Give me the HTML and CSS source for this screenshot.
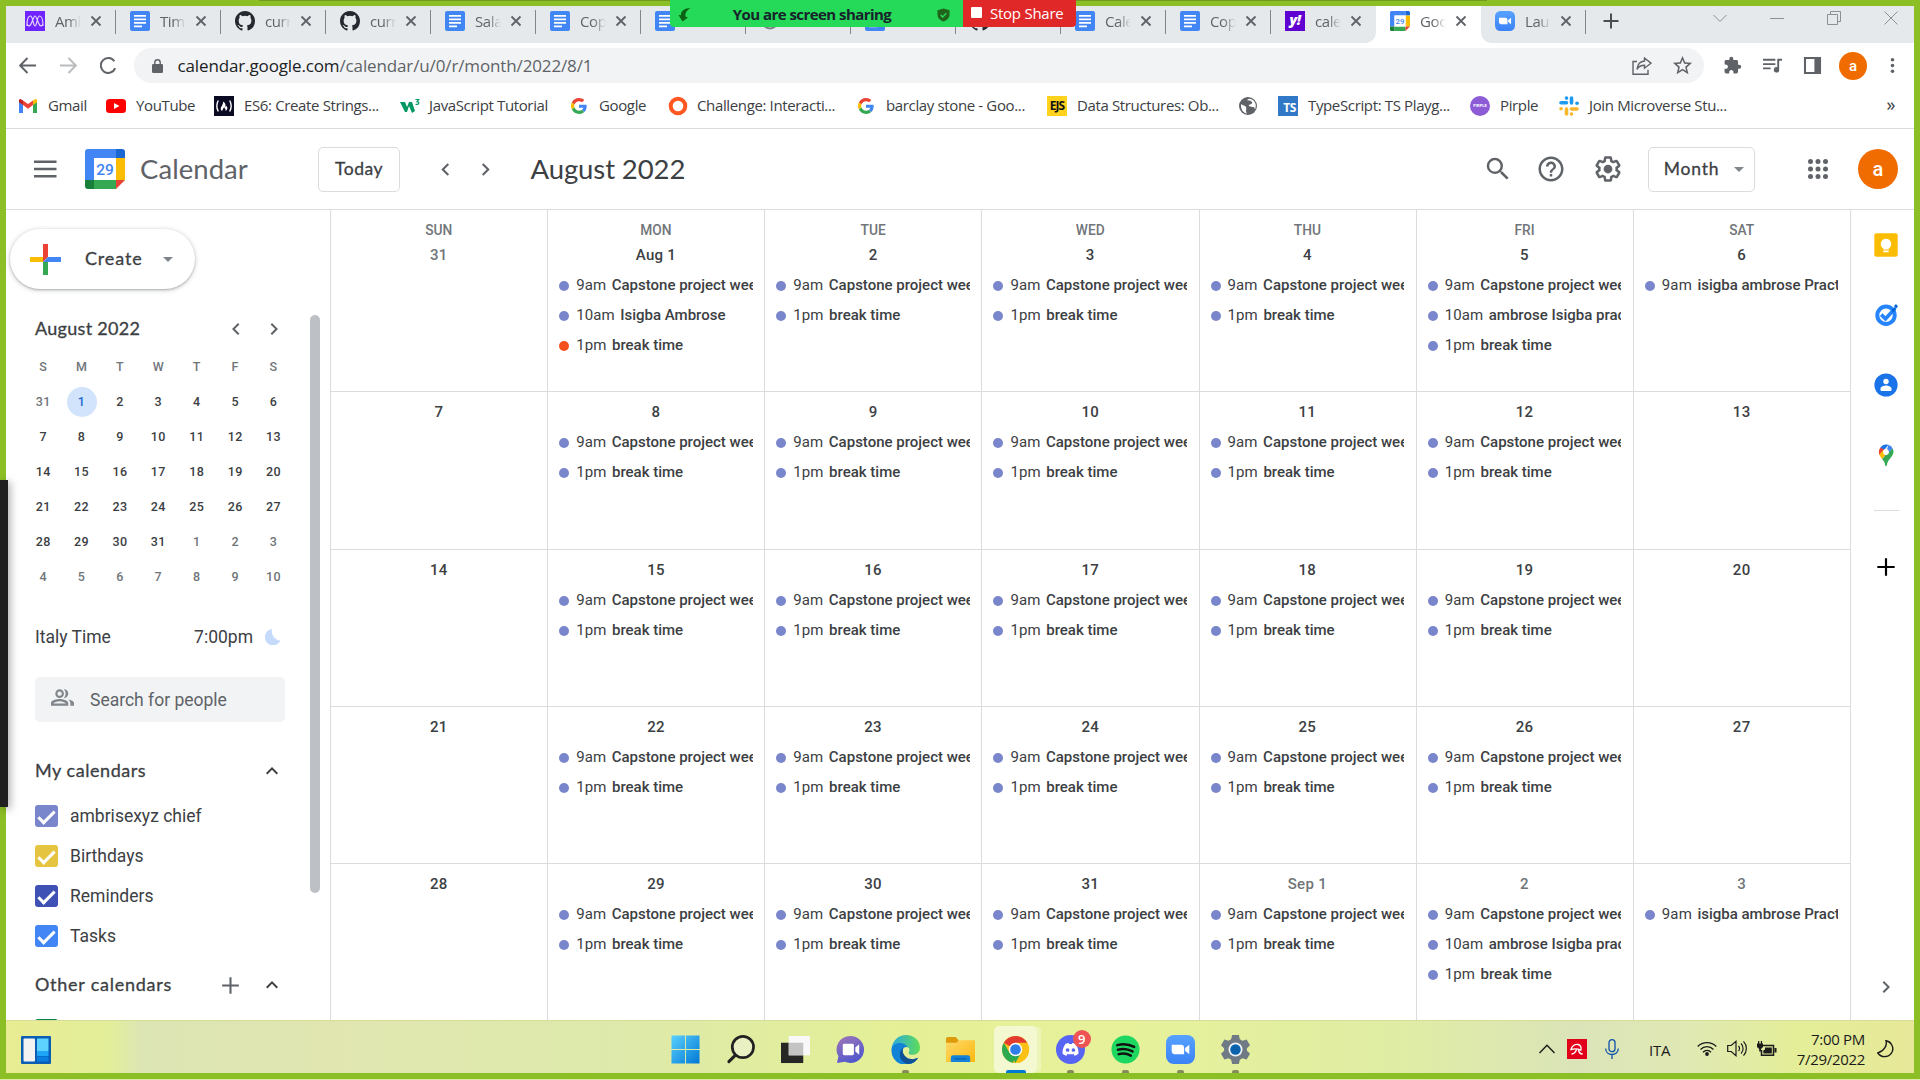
FILE: index.html
```html
<!DOCTYPE html>
<html lang="en">
<head>
<meta charset="utf-8">
<title>Google Calendar - August 2022</title>
<link rel="stylesheet" href="styles.css">
</head>
<body>
<svg class="defs" aria-hidden="true">
  <defs>
    <linearGradient id="gwin" x1="0" y1="0" x2="1" y2="1"><stop offset="0" stop-color="#5bd0ff"/><stop offset="1" stop-color="#0078d4"/></linearGradient>
    <linearGradient id="gchat" x1="0" y1="0" x2="0.5" y2="1"><stop offset="0" stop-color="#a177b8"/><stop offset="1" stop-color="#5358cc"/></linearGradient>
    <linearGradient id="gedge" x1="0" y1="0" x2="1" y2="0"><stop offset="0" stop-color="#2aa9e0"/><stop offset="1" stop-color="#5fdc58"/></linearGradient>
    <linearGradient id="gfold" x1="0" y1="0" x2="1" y2="1"><stop offset="0" stop-color="#ffd96a"/><stop offset="1" stop-color="#fbb80d"/></linearGradient>
    <linearGradient id="gzoom" x1="0" y1="0" x2="0" y2="1"><stop offset="0" stop-color="#57a2ff"/><stop offset="1" stop-color="#3b82f6"/></linearGradient>
  </defs>
  <symbol id="docs" viewBox="0 0 20 20"><rect width="20" height="20" rx="2" fill="#4285f4"/><path d="M4 4.800h12M4 8.300h12M4 11.800h12M4 15.300h8" stroke="#fff" stroke-width="1.700"/></symbol>
  <symbol id="github" viewBox="0 0 16 16"><path fill="#24292f" d="M8 0C3.580 0 0 3.580 0 8c0 3.540 2.290 6.530 5.470 7.590.4.070.55-.17.55-.38 0-.19-.01-.82-.01-1.490-2.010.37-2.530-.49-2.690-.94-.09-.23-.48-.94-.82-1.130-.28-.15-.68-.52-.01-.53.63-.01 1.080.58 1.230.82.72 1.210 1.870.87 2.330.66.07-.52.28-.87.51-1.070-1.780-.2-3.640-.89-3.640-3.950 0-.87.31-1.590.82-2.150-.08-.2-.36-1.020.08-2.120 0 0 .67-.21 2.200.82a7.600 7.600 0 0 1 4 0c1.530-1.040 2.200-.82 2.200-.82.44 1.100.16 1.920.08 2.120.51.56.82 1.270.82 2.150 0 3.070-1.870 3.750-3.650 3.950.29.25.54.73.54 1.480 0 1.070-.01 1.930-.01 2.200 0 .21.15.46.55.38A8.010 8.010 0 0 0 16 8c0-4.420-3.580-8-8-8z"/></symbol>
  <symbol id="x" viewBox="0 0 12 12"><path d="M1.500 1.500l9 9M10.500 1.500l-9 9" stroke="#5f6368" stroke-width="1.800"/></symbol>
  <symbol id="gcal" viewBox="0 0 40 40"><path d="M3 0h28v9H9v22H0V3a3 3 0 0 1 3-3z" fill="#4285f4"/><path d="M31 0h6a3 3 0 0 1 3 3v6h-9z" fill="#1967d2"/><path d="M31 9h9v22h-9z" fill="#fbbc04"/><path d="M9 31h22v9H9z" fill="#34a853"/><path d="M0 31h9v9H3a3 3 0 0 1-3-3z" fill="#188038"/><path d="M31 31h9l-9 9z" fill="#ea4335"/><path d="M9 9h22v22H9z" fill="#fff"/><text x="20" y="26" text-anchor="middle" font-family="Roboto,sans-serif" font-weight="500" font-size="15.500" fill="#4285f4">29</text></symbol>
  <symbol id="google" viewBox="0 0 48 48"><path fill="#ea4335" d="M24 9.500c3.540 0 6.710 1.220 9.210 3.600l6.850-6.850C35.900 2.380 30.470 0 24 0 14.620 0 6.510 5.380 2.560 13.220l7.980 6.190C12.430 13.720 17.740 9.500 24 9.500z"/><path fill="#4285f4" d="M46.980 24.550c0-1.570-.15-3.090-.38-4.550H24v9.020h12.940c-.58 2.960-2.260 5.480-4.780 7.180l7.730 6c4.510-4.180 7.090-10.360 7.090-17.650z"/><path fill="#fbbc05" d="M10.530 28.590a14.500 14.500 0 0 1 0-9.180l-7.980-6.190a24 24 0 0 0 0 21.560l7.980-6.190z"/><path fill="#34a853" d="M24 48c6.480 0 11.930-2.130 15.890-5.810l-7.730-6c-2.150 1.450-4.920 2.300-8.160 2.300-6.260 0-11.570-4.220-13.470-9.910l-7.980 6.190C6.510 42.620 14.620 48 24 48z"/></symbol>
  <symbol id="left" viewBox="0 0 24 24"><path d="M15.410 7.410L14 6l-6 6 6 6 1.410-1.410L10.830 12z"/></symbol>
  <symbol id="right" viewBox="0 0 24 24"><path d="M10 6L8.590 7.410 13.170 12l-4.580 4.590L10 18l6-6z"/></symbol>
  <symbol id="up" viewBox="0 0 24 24"><path d="M12 8l-6 6 1.410 1.410L12 10.830l4.590 4.580L18 14z"/></symbol>
  <symbol id="caret" viewBox="0 0 10 5"><path d="M0 0h10L5 5z" fill="#80868b"/></symbol>
  <symbol id="plus" viewBox="0 0 24 24"><path d="M20 13h-7v7h-2v-7H4v-2h7V4h2v7h7v2z"/></symbol>
  <symbol id="zoomapp" viewBox="0 0 28 28"><rect width="28" height="28" rx="7.500" fill="url(#gzoom)"/><path d="M5.500 9.500h9a3 3 0 0 1 3 3v6h-9a3 3 0 0 1-3-3zM18.500 12.500l4-3v9l-4-3z" fill="#fff"/></symbol>
</svg>

<div class="window">
  <div class="tabs">
    <div class="tab"><svg class="fav" viewBox="0 0 20 20"><rect width="20" height="20" fill="#6f23ff"/><path d="M2 15C2 9 3 5 5.500 5S8 15 10 15s2-10 4.500-10S18 9 18 15M2 13c1.500 3 3 2.500 4.500-1S9 5 10 5s2 3.500 3.500 7 3 4 4.500 1" fill="none" stroke="#e3d3ff" stroke-width="1.200"/></svg><span class="label">Aml</span><svg class="x"><use href="#x"/></svg></div>
    <div class="tab"><svg class="fav"><use href="#docs"/></svg><span class="label">Time</span><svg class="x"><use href="#x"/></svg></div>
    <div class="tab"><svg class="fav"><use href="#github"/></svg><span class="label">curr</span><svg class="x"><use href="#x"/></svg></div>
    <div class="tab"><svg class="fav"><use href="#github"/></svg><span class="label">curr</span><svg class="x"><use href="#x"/></svg></div>
    <div class="tab"><svg class="fav"><use href="#docs"/></svg><span class="label">Sala</span><svg class="x"><use href="#x"/></svg></div>
    <div class="tab"><svg class="fav"><use href="#docs"/></svg><span class="label">Cop</span><svg class="x"><use href="#x"/></svg></div>
    <div class="tab"><svg class="fav"><use href="#docs"/></svg></div>
    <div class="tab"><svg class="fav" viewBox="0 0 20 20"><circle cx="10" cy="10" r="7.500" fill="none" stroke="#7b8085" stroke-width="2"/></svg></div>
    <div class="tab"><svg class="fav"><use href="#docs"/></svg></div>
    <div class="tab"><svg class="fav"><use href="#github"/></svg></div>
    <div class="tab"><svg class="fav"><use href="#docs"/></svg><span class="label">Cale</span><svg class="x"><use href="#x"/></svg></div>
    <div class="tab"><svg class="fav"><use href="#docs"/></svg><span class="label">Cop</span><svg class="x"><use href="#x"/></svg></div>
    <div class="tab before"><span class="fav yahoo">y!</span><span class="label">cale</span><svg class="x"><use href="#x"/></svg></div>
    <div class="tab active"><svg class="fav"><use href="#gcal"/></svg><span class="label">Goo</span><svg class="x"><use href="#x"/></svg></div>
    <div class="tab after"><svg class="fav"><use href="#zoomapp"/></svg><span class="label">Lau</span><svg class="x"><use href="#x"/></svg></div>
    <svg class="newtab" viewBox="0 0 16 16"><path d="M8 .5v15M.5 8h15" stroke="#4a4d51" stroke-width="2"/></svg>
    <div class="controls">
      <svg viewBox="0 0 14 14"><path d="M.5 4l6.500 6.500L13.500 4"/></svg>
      <svg viewBox="0 0 14 14"><path d="M0 7.500h14"/></svg>
      <svg viewBox="0 0 14 14"><path d="M.5 3.500h10v10H.5zM3.500 3.500V.5h10v10h-3"/></svg>
      <svg viewBox="0 0 14 14"><path d="M.5.5l13 13M13.500.5l-13 13"/></svg>
    </div>
  </div>

  <div class="toolbar">
    <svg class="nav" viewBox="0 0 16 16"><path d="M16 8H1.500M8 1L1 8l7 7" stroke="#5f6368"/></svg>
    <svg class="nav" viewBox="0 0 16 16"><path d="M0 8h14.500M8 1l7 7-7 7" stroke="#babcbe"/></svg>
    <svg class="nav" viewBox="0 0 16 16"><path d="M14.300 10.500A7 7 0 1 1 13.500 4" stroke="#5f6368"/><path d="M15.500.5v6.200H9.300z" fill="#5f6368" stroke="none"/></svg>
    <div class="omnibox">
      <svg class="lock" viewBox="0 0 11 14"><rect y="5" width="11" height="9" rx="1.200" fill="#5f6368"/><path d="M2.800 6V3.500a2.700 2.700 0 0 1 5.400 0V6" fill="none" stroke="#5f6368" stroke-width="1.400"/></svg>
      <span class="url"><b>calendar.google.com</b>/calendar/u/0/r/month/2022/8/1</span>
      <svg class="share" viewBox="0 0 20 18"><path d="M5 4.500H1v12.800h15v-4.500M12.500 1l6.500 5.200-6.500 5V8.300c-4 0-6 1.500-7.500 4 .5-4.500 3-8 7.500-8.300z" fill="none" stroke="#5f6368" stroke-width="1.400"/></svg>
      <svg class="star" viewBox="0 0 24 24"><path fill="#5f6368" d="M22 9.240l-7.190-.62L12 2 9.190 8.630 2 9.240l5.460 4.730L5.820 21 12 17.270 18.180 21l-1.630-7.030L22 9.240zM12 15.400l-3.760 2.270 1-4.280-3.320-2.880 4.380-.38L12 6.100l1.710 4.040 4.380.38-3.320 2.880 1 4.280L12 15.400z"/></svg>
    </div>
    <div class="tools">
      <svg viewBox="0 0 24 24"><path d="M20.500 11H19V7c0-1.100-.9-2-2-2h-4V3.500a2.500 2.500 0 0 0-5 0V5H4c-1.100 0-1.990.9-1.990 2v3.800H3.500c1.490 0 2.700 1.210 2.700 2.700s-1.210 2.700-2.700 2.700H2V20c0 1.100.9 2 2 2h3.800v-1.500c0-1.490 1.210-2.700 2.700-2.700 1.490 0 2.700 1.210 2.700 2.700V22H17c1.100 0 2-.9 2-2v-4h1.500a2.500 2.500 0 0 0 0-5z"/></svg>
      <svg viewBox="0 0 20 20"><path d="M0 3h13v2H0zM0 7.500h13v2H0zM0 12h8v2H0zM15 3h5v2h-3v9.500a2.800 2.800 0 1 1-2-2.600z"/></svg>
      <svg viewBox="0 0 20 20"><path d="M1 1h18v18H1zM3.200 3.200v13.600H12V3.200z" fill-rule="evenodd"/></svg>
      <span class="me small">a</span>
      <svg viewBox="0 0 20 20"><circle cx="10" cy="4" r="1.900"/><circle cx="10" cy="10" r="1.900"/><circle cx="10" cy="16" r="1.900"/></svg>
    </div>
  </div>

  <div class="bookmarks">
    <div class="bm"><svg viewBox="0 0 20 20"><path d="M1 17V5l4 3v9z" fill="#4285f4"/><path d="M15 17V8l4-3v12z" fill="#34a853"/><path d="M15 4.500l2-1.300c1-.6 2 .2 2 1.300v1.700L15 9z" fill="#fbbc04"/><path d="M5 9V4.500L10 8l5-3.500V9l-5 3.800z" fill="#ea4335"/><path d="M5 4.500L3 3.200c-1-.6-2 .2-2 1.300v1.700L5 9z" fill="#c5221f"/></svg><span>Gmail</span></div>
    <div class="bm"><svg viewBox="0 0 20 20"><rect y="3" width="20" height="14" rx="3.500" fill="#f00"/><path d="M8 7l5.500 3L8 13z" fill="#fff"/></svg><span>YouTube</span></div>
    <div class="bm"><svg viewBox="0 0 20 20"><rect width="20" height="20" fill="#0a0a23"/><path d="M4.300 4.500Q1.300 10 4.300 15.500M15.700 4.500Q18.700 10 15.700 15.500" fill="none" stroke="#fff" stroke-width="1.400"/><path d="M8 15c-3.500-3 1.500-5.500 1.200-9.500 3 1.800 2 4 2.600 5.500.6-.4.500-1 .3-1.500 2 2 1.500 4.500-.6 5.500.8-1.800-1-2.500-1.200-3.800-1.300 1-1.300 2.300-2.300 3.800z" fill="#fff"/></svg><span>ES6: Create Strings...</span></div>
    <div class="bm"><svg viewBox="0 0 20 20"><path d="M0 6h5l2 5 2-5h3l3 9-3 2-3-7-2 6H5z" fill="#059862"/><path d="M15.500 3.500h3.300L17 5.700c3 .2 2 3.600-1.500 2.500" fill="none" stroke="#059862" stroke-width="1.200"/></svg><span>JavaScript Tutorial</span></div>
    <div class="bm"><svg class="g"><use href="#google"/></svg><span>Google</span></div>
    <div class="bm"><svg viewBox="0 0 20 20"><circle cx="10" cy="10" r="7.300" fill="none" stroke="#ff5722" stroke-width="4"/></svg><span>Challenge: Interacti...</span></div>
    <div class="bm"><svg class="g"><use href="#google"/></svg><span>barclay stone - Goo...</span></div>
    <div class="bm"><span class="ejs">EJS</span><span>Data Structures: Ob...</span></div>
    <div class="bm"><svg viewBox="0 0 20 20"><circle cx="10" cy="10" r="9" fill="#5f6368"/><path d="M3 8c2 2 4 1 5 3s-1 4 1 6.500C5 17 2.500 13 3 8zM9 4c1 1 4 0 5 2s-2 2-3 3 2 2 4 2 1.500 2 2 2.500C19.500 8 16 3 11 2.700z" fill="#fff"/></svg></div>
    <div class="bm"><span class="ts">TS</span><span>TypeScript: TS Playg...</span></div>
    <div class="bm"><span class="pirple">PIRPLE</span><span>Pirple</span></div>
    <div class="bm"><svg viewBox="0 0 20 20" stroke-width="3.600" stroke-linecap="round"><path d="M7.500 2v.1M7.500 6.700H2M12.500 2v5" stroke="#1d9bf0"/><path d="M18 7.300h.1" stroke="#1d9bf0"/><path d="M2 12.700h.1M7.500 13v5M12.500 13H18M12.500 18v.1" stroke="#f9b52c"/></svg><span>Join Microverse Stu...</span></div>
    <span class="more">»</span>
  </div>

  <header class="header">
    <svg class="menu" viewBox="0 0 24 24"><path d="M1 3.500h22.500v2.400H1zM1 10.800h22.500v2.400H1zM1 18.100h22.500v2.400H1z"/></svg>
    <svg class="logo"><use href="#gcal"/></svg>
    <span class="brand">Calendar</span>
    <button class="btn today"><span>Today</span></button>
    <svg class="chev"><use href="#left"/></svg>
    <svg class="chev"><use href="#right"/></svg>
    <h1>August 2022</h1>
    <div class="actions">
      <svg viewBox="0 0 24 24"><path d="M15.500 14h-.79l-.28-.27A6.470 6.470 0 0 0 16 9.500 6.500 6.500 0 1 0 9.500 16c1.610 0 3.090-.59 4.230-1.570l.27.28v.79l5 4.990L20.490 19l-4.990-5zm-6 0C7.010 14 5 11.990 5 9.500S7.010 5 9.500 5 14 7.010 14 9.500 11.990 14 9.500 14z"/></svg>
      <svg viewBox="0 0 24 24"><path d="M11 18h2v-2h-2v2zm1-16C6.480 2 2 6.480 2 12s4.480 10 10 10 10-4.480 10-10S17.520 2 12 2zm0 18c-4.410 0-8-3.590-8-8s3.590-8 8-8 8 3.590 8 8-3.590 8-8 8zm0-14c-2.210 0-4 1.790-4 4h2c0-1.100.9-2 2-2s2 .9 2 2c0 2-3 1.750-3 5h2c0-2.250 3-2.500 3-5 0-2.210-1.790-4-4-4z"/></svg>
      <svg viewBox="0 0 24 24"><path d="M13.850 22.250h-3.700c-.74 0-1.360-.54-1.450-1.270l-.27-1.890c-.27-.14-.53-.29-.79-.46l-1.800.72c-.7.26-1.470-.03-1.810-.65L2.200 15.530c-.35-.66-.2-1.440.36-1.880l1.530-1.190c-.01-.15-.02-.3-.02-.46 0-.15.01-.31.02-.46l-1.520-1.190c-.59-.45-.74-1.260-.37-1.880l1.850-3.190c.34-.62 1.110-.9 1.790-.63l1.810.73c.26-.17.52-.32.78-.46l.27-1.910c.09-.7.71-1.250 1.440-1.250h3.700c.74 0 1.360.54 1.450 1.270l.27 1.890c.27.14.53.29.79.46l1.800-.72c.71-.26 1.480.03 1.820.65l1.840 3.180c.36.66.2 1.440-.36 1.880l-1.520 1.190c.01.15.02.3.02.46s-.01.31-.02.46l1.520 1.190c.56.45.72 1.230.37 1.860l-1.860 3.220c-.34.62-1.110.9-1.800.63l-1.800-.72c-.26.17-.52.32-.78.46l-.27 1.910c-.1.68-.72 1.220-1.460 1.220zm-3.230-2h2.760l.37-2.550.53-.22c.44-.18.88-.44 1.340-.78l.45-.34 2.380.96 1.380-2.400-2.030-1.580.07-.56c.03-.26.06-.51.06-.78s-.03-.53-.06-.78l-.07-.56 2.030-1.580-1.390-2.400-2.390.96-.45-.35c-.42-.32-.87-.58-1.330-.77l-.52-.22-.37-2.550h-2.760l-.37 2.550-.53.21c-.44.19-.88.44-1.340.79l-.45.33-2.380-.95-1.390 2.390 2.030 1.580-.07.56a7 7 0 0 0-.06.79c0 .26.020.53.060.78l.07.56-2.030 1.580 1.380 2.400 2.390-.96.45.35c.43.33.86.58 1.330.77l.53.22.38 2.550z"/><circle cx="12" cy="12" r="3.500"/></svg>
    </div>
    <button class="btn month"><span>Month</span><svg><use href="#caret"/></svg></button>
    <svg class="apps" viewBox="0 0 20 20"><g fill="#5f6368"><circle cx="2.500" cy="2.500" r="2.500"/><circle cx="10" cy="2.500" r="2.500"/><circle cx="17.500" cy="2.500" r="2.500"/><circle cx="2.500" cy="10" r="2.500"/><circle cx="10" cy="10" r="2.500"/><circle cx="17.500" cy="10" r="2.500"/><circle cx="2.500" cy="17.500" r="2.500"/><circle cx="10" cy="17.500" r="2.500"/><circle cx="17.500" cy="17.500" r="2.500"/></g></svg>
    <span class="me">a</span>
  </header>

  <main class="main">
    <aside class="sidebar">
      <button class="create"><svg class="cplus" viewBox="0 0 31 31"><path d="M13 0h5v13l-5 5z" fill="#ea4335"/><path d="M0 13h13v5H0z" fill="#fbbc04"/><path d="M13 18h5v13h-5z" fill="#34a853"/><path d="M18 13h13v5H13z" fill="#4285f4"/></svg><span>Create</span><svg class="caret"><use href="#caret"/></svg></button>
      <div class="scroll">
        <div class="content">
          <div class="minihead"><span>August 2022</span><svg><use href="#left"/></svg><svg><use href="#right"/></svg></div>
          <div class="mini" id="mini"></div>
          <div class="tz"><span>Italy Time</span><span class="clock">7:00pm</span><svg viewBox="0 0 16 16"><path d="M7 0a8.200 8.200 0 1 0 8.500 11.500A9.500 9.500 0 0 1 7 0z" fill="#c6dafc"/></svg></div>
          <div class="people"><svg viewBox="0 0 24 18"><path d="M9 1a4.500 4.500 0 1 1 0 9 4.500 4.500 0 0 1 0-9zm0 2.200a2.300 2.300 0 1 0 0 4.600 2.300 2.300 0 0 0 0-4.600zM0 18v-2.500C0 12.500 6 11.200 9 11.200s9 1.300 9 4.300V18zm2.300-2.200h13.400C15 14.500 11.500 13.400 9 13.400s-6 1.100-6.700 2.400zM13.500.9a4.500 4.500 0 0 1 0 9.100 6.600 6.600 0 0 0 0-9.100zM18 11.500c3 .6 6 1.800 6 4V18h-3.800v-2.500c0-1.600-.9-3-2.200-4z" fill="#80868b" fill-rule="evenodd"/></svg><span>Search for people</span></div>
          <div class="grouphead"><span>My calendars</span><svg><use href="#up"/></svg></div>
          <ul class="cals">
            <li><i class="box lav"></i>ambrisexyz chief</li>
            <li><i class="box yel"></i>Birthdays</li>
            <li><i class="box ind"></i>Reminders</li>
            <li><i class="box blu"></i>Tasks</li>
          </ul>
          <div class="grouphead other"><span>Other calendars</span><svg class="add"><use href="#plus"/></svg><svg><use href="#up"/></svg></div>
          <ul class="cals last"><li><i class="box grn"></i></li></ul>
        </div>
        <div class="track"><div class="thumb"></div></div>
      </div>
    </aside>
    <section class="grid" id="grid"></section>
    <aside class="panel">
      <svg viewBox="0 0 24 24"><rect x=".3" y=".3" width="23.400" height="23.400" rx="2" fill="#fbbc04"/><path d="M12 5.700a5.300 5.300 0 0 0-2.700 9.800v1h5.400v-1A5.300 5.300 0 0 0 12 5.700zM9.300 17.500h5.400v1.800H9.300z" fill="#fff"/></svg>
      <svg viewBox="0 0 24 24"><circle cx="12" cy="12.300" r="8.700" fill="none" stroke="#2684fc" stroke-width="4"/><path d="M20 3l2-2 2 2.500-2 2z" fill="#0066da"/><path d="M7.200 11.600l4.300 4.200L20.500 6" fill="none" stroke="#2684fc" stroke-width="3.600"/><path d="M17.500 7l3-3 2 2-4 4z" fill="#0066da"/></svg>
      <svg viewBox="0 0 24 24"><circle cx="12" cy="12" r="11.600" fill="#1a73e8"/><circle cx="12" cy="8.500" r="2.700" fill="#fff"/><path d="M6.500 17v-1.400c0-2 3.600-3 5.500-3s5.500 1 5.500 3V17c0 .5-.4.900-.9.900H7.400a.9.900 0 0 1-.9-.9z" fill="#fff"/></svg>
      <svg viewBox="0 0 24 24"><path d="M6.200 4.800A7.500 7.500 0 0 1 14.500 1.800L9 8.500z" fill="#1a73e8"/><path d="M14.500 1.800A7.400 7.400 0 0 1 18.700 5.500L9.800 15.500 12 9z" fill="#4285f4"/><path d="M6.200 4.800A7.500 7.500 0 0 0 5.500 12l5-5.500z" fill="#ea4335"/><path d="M5.300 11.500c.6 1.800 1.700 3 2.800 4.500L14.500 9 9.500 7z" fill="#fbbc04"/><path d="M18.700 5.500c2 4-.2 7-2.200 9.500-1.800 2.200-3.200 4-3.800 7.500-.2 1-1.200 1-1.400 0-.5-2.800-1.500-4.700-3.200-6.500z" fill="#34a853"/><circle cx="12" cy="9" r="2.900" fill="#fff"/></svg>
      <hr>
      <svg class="addon"><use href="#plus"/></svg>
      <svg class="collapse"><use href="#right"/></svg>
    </aside>
  </main>

  <footer class="taskbar">
    <svg class="widgets" viewBox="0 0 30 28"><rect width="30" height="28" rx="1" fill="#0a5fb5"/><rect x="2.500" y="2.500" width="11.500" height="23" rx="1" fill="#f2f2f2"/><rect x="16" y="2.500" width="11.500" height="12.500" fill="#5fd3ff"/><rect x="16" y="15" width="11.500" height="5" fill="#1ea5f8"/><rect x="16" y="20.500" width="11.500" height="5" fill="#0a7de0"/></svg>
    <div class="apps-row">
      <div class="app"><svg viewBox="0 0 30 30"><path d="M.5.500h14v14H.5zM15.500.5h14v14h-14zM.5 15.500h14v14H.5zM15.500 15.500h14v14h-14z" fill="url(#gwin)"/></svg></div>
      <div class="app"><svg viewBox="0 0 30 30"><circle cx="17.500" cy="12.500" r="11" fill="#f1f3e4" fill-opacity=".5" stroke="#222" stroke-width="2.800"/><path d="M9.500 21L3 27.500" stroke="#222" stroke-width="3.200" stroke-linecap="round"/></svg></div>
      <div class="app"><svg viewBox="0 0 30 30"><rect y="8" width="23" height="21" fill="#262624"/><rect x="8" y="1" width="22" height="20" fill="#f8f8f8"/><rect x="8" y="8" width="15" height="13" fill="#c4c4c4"/></svg></div>
      <div class="app"><svg viewBox="0 0 30 30"><path d="M15 1a14 14 0 0 1 0 28c-2 0-4-.4-5.500-1.200L1 29l1.500-7A14 14 0 0 1 15 1z" fill="url(#gchat)"/><rect x="7" y="9" width="11.500" height="12" rx="1.500" fill="#fff"/><path d="M20 13l4-3.500v11L20 17z" fill="#fff"/></svg></div>
      <div class="app run"><svg viewBox="0 0 30 30"><path d="M.6 14C1.500 5.500 8 0 15.500 0 24 0 30 6 30 13c0 5-3.500 7.500-7.500 7.500-3 0-5-1-4-3 1-1.500 1-3.500-1-5C13 9 4 9.500.6 14z" fill="url(#gedge)"/><path d="M.5 15C1 9 9 6.500 14 9.500c2 1.200 3 2.200 3.500 3.500-2-1.500-5-.5-5.500 3-.5 6 4 9.500 9.500 9.500 3 0 5-1.500 6-1A14.800 14.800 0 0 1 .5 15z" fill="#1182d6"/><path d="M12.500 13.500c-2 5.500 3 11.500 9.500 11.500 3 0 5.500-2 6-1A14.500 14.500 0 0 1 17 30C8 28 7 17 12.500 13.500z" fill="#0f5097"/></svg></div>
      <div class="app"><svg viewBox="0 0 30 30"><path d="M0 4a2 2 0 0 1 2-2h8l3 3.500V10H0z" fill="#dd9a0a"/><path d="M0 8h11l2-2.500h17V28H0z" fill="url(#gfold)"/><path d="M5 28v-4.500A2.500 2.500 0 0 1 7.500 21h15a2.500 2.500 0 0 1 2.500 2.500V28z" fill="#1283d8"/><path d="M9 24.700h12" stroke="#0b5ca8" stroke-width="1.200"/></svg></div>
      <div class="app current"><svg viewBox="0 0 30 30"><circle cx="15" cy="15" r="14" fill="#fbc116"/><path d="M15 15L2.900 8A14 14 0 0 1 27.100 8z" fill="#e33b2e"/><path d="M2.900 8L9 18.500l6 3.500-2.500 6.800A14 14 0 0 1 2.900 8z" fill="#2da94f"/><path d="M9.500 18.200L15 29a14 14 0 0 0 1-.1L21 18z" fill="#2da94f"/><path d="M20.800 18.500L14.800 29A14 14 0 0 0 27.200 8H15z" fill="#fbc116"/><circle cx="15" cy="15" r="7" fill="#fff"/><circle cx="15" cy="15" r="5.500" fill="#2f7de9"/></svg></div>
      <div class="app run"><svg viewBox="0 0 30 30"><circle cx="15" cy="15" r="15" fill="#5865f2"/><path d="M9.500 9.500c2-1 3-1.200 3.500-1.200l.5 1h3l.5-1c.5 0 1.500.2 3.500 1.200 2.500 4 3 7 2.700 10-1.500 1.200-2.700 1.700-4 2l-1-1.600 1.300-.8c-3 1.200-6 1.200-9 0l1.300.8-1 1.600c-1.300-.3-2.500-.8-4-2-.3-3 .2-6 2.700-10z" fill="#fff"/><circle cx="12" cy="15.500" r="1.900" fill="#5865f2"/><circle cx="18" cy="15.500" r="1.900" fill="#5865f2"/></svg><span class="badge">9</span></div>
      <div class="app run"><svg viewBox="0 0 30 30"><circle cx="15" cy="15" r="14.500" fill="#1ed760"/><path d="M6.500 10.500c6-1.800 12-1.200 17.500 1.800M7.300 15.300c5-1.500 10-1 15 1.600M8 19.800c4.500-1.200 8.500-.8 12.500 1.500" fill="none" stroke="#111" stroke-width="2.600" stroke-linecap="round"/></svg></div>
      <div class="app run"><svg><use href="#zoomapp"/></svg></div>
      <div class="app run"><svg viewBox="0 0 30 30"><path d="M11.500 0h7l1 4.300 2.700 1.600 4.300-1.300 3.500 6-3.200 3v2.800l3.200 3-3.500 6-4.300-1.300-2.700 1.600-1 4.300h-7l-1-4.300-2.700-1.600-4.300 1.300-3.500-6 3.200-3v-2.800l-3.200-3 3.500-6 4.300 1.300 2.700-1.600z" fill="#6f7a84"/><circle cx="15" cy="15" r="7.300" fill="#eef2f5"/><circle cx="15" cy="15" r="5.400" fill="#0a62ad"/></svg></div>
    </div>
    <div class="tray">
      <svg class="t1" viewBox="0 0 16 10"><path d="M.5 9L8 1.300 15.500 9" fill="none" stroke="#1b1b1b" stroke-width="1.400"/></svg>
      <svg class="t2" viewBox="0 0 20 20"><rect width="20" height="20" fill="#e2001a"/><path d="M4 10.500C4.500 7 8 5 11 5.500c2.500.4 3.700 3 2.800 5.700-3-1.500-6.300-1.700-9.800-.7zM9.500 10.500c-.8 2.500-2.300 4.300-5 4.500M11.500 10.800c.3 2.500 1.800 4 4.200 4.200" fill="none" stroke="#fff" stroke-width="1.400"/></svg>
      <svg class="t3" viewBox="0 0 14 20"><rect x="4" y=".7" width="6" height="12" rx="3" fill="none" stroke="#0f52a8" stroke-width="1.300"/><path d="M.7 9.500c0 8 12.600 8 12.600 0M7 15.500V20" fill="none" stroke="#0f52a8" stroke-width="1.300"/></svg>
      <span class="lang">ITA</span>
      <svg class="t4" viewBox="0 0 20 15"><path d="M.7 5.500a13 13 0 0 1 18.600 0M3.500 8.500a9 9 0 0 1 13 0M6 11.200a5.500 5.500 0 0 1 8 0" fill="none" stroke="#1b1b1b" stroke-width="1.300"/><circle cx="10" cy="13" r="1.900" fill="#1b1b1b"/></svg>
      <svg class="t5" viewBox="0 0 20 17"><path d="M.7 5.500h3.500L9 1.300v14.400l-4.800-4.200H.7zM11.500 6a3.500 3.500 0 0 1 0 5M14 3.500a7 7 0 0 1 0 10M16.500 1.300a10.500 10.500 0 0 1 0 14.400" fill="none" stroke="#1b1b1b" stroke-width="1.200"/></svg>
      <svg class="t6" viewBox="0 0 20 16"><path d="M6 4.500h10.500v9.800H4.500V9" fill="none" stroke="#1b1b1b" stroke-width="1.500"/><path d="M8 6.500h6.800v6H6.300V9.500L8 8.500zM17.500 7h2v4.500h-2zM0 2.500h6v3.500L4 8v2.500H2.200V8L0 6zM1 0h1.300v3H1zM3.800 0h1.300v3H3.800z" fill="#1b1b1b"/></svg>
      <div class="time"><span>7:00 PM</span><span>7/29/2022</span></div>
      <svg class="t7" viewBox="0 0 17 18"><path d="M9 .8c1.500 4.500-2 10.500-8.200 12.200 4 5.500 12 4.500 14.500-1.500C17 7 14 1.500 9 .8z" fill="none" stroke="#1b1b1b" stroke-width="1.400"/></svg>
    </div>
  </footer>
</div>

<div class="sharebar">
  <div class="sharing"><svg viewBox="0 0 12 14"><path d="M12 0C5 .5 2 3.500 2.500 7.300L0 7l4 6.500L9.500 9.500 7 8.500C6.300 5 8.500 2 12 0z" fill="#0b6114"/></svg><span>You are screen sharing</span><svg viewBox="0 0 14 14"><path d="M7 0l6.500 2v4.500c0 4-3 6.500-6.500 7.500C3.500 13 .5 10.500.5 6.500V2z" fill="#20651c"/><path d="M4 7l2.200 2.200L10 5" fill="none" stroke="#2bdc5c" stroke-width="1.500"/></svg></div>
  <div class="stop"><i></i><span>Stop Share</span></div>
</div>
<div class="topshade"></div>
<div class="drawer"></div>
<script src="app.js"></script>
</body>
</html>
```
FILE: styles.css
```css
* { box-sizing: border-box; }
body {
  margin: 0; width: 1920px; height: 1080px; overflow: hidden; position: relative;
  padding: 6px 6px 7px; background: linear-gradient(#8cbf26 1079px, #dfeaa8 1079px);
  font-family: Roboto, "Liberation Sans", sans-serif; color: #3c4043;
}
.defs { position: absolute; width: 0; height: 0; }
svg { display: block; flex: none; }
button { font: inherit; color: inherit; background: #fff; padding: 0; }
ul { list-style: none; margin: 0; padding: 0; }
.window { width: 1908px; height: 1067px; background: #fff; display: flex; flex-direction: column; }

/* Browser chrome */
.tabs, .toolbar, .bookmarks, .taskbar, .sharebar { font-family: "Open Sans", "Noto Sans", sans-serif; }
.tabs { height: 37px; flex: none; background: #e6e9ec; display: flex; align-items: flex-start; padding-left: 5px; }
.tab { width: 105px; flex: none; height: 37px; display: flex; padding: 5px 0 0 14px; position: relative; background: #e6e9ec; }
.tab::after { content: ""; position: absolute; right: 0; top: 4px; width: 1px; height: 24px; background: #80868b; }
.tab.before::after, .tab.active::after { display: none; }
.tab.active { background: #fff; }
.tab.before { background: radial-gradient(circle at 0 0, #e6e9ec 9.500px, #fff 10px) right bottom / 10px 10px no-repeat, #e6e9ec; }
.tab.after { background: radial-gradient(circle at 100% 0, #e6e9ec 9.500px, #fff 10px) left bottom / 10px 10px no-repeat, #e6e9ec; }
.fav { width: 20px; height: 20px; flex: none; }
.yahoo { background: #5f01d1; color: #fff; font: italic 800 14px/18px "Open Sans", sans-serif; text-align: center; letter-spacing: -.5px; }
.label {
  margin-left: 10px; width: 26px; font-size: 15px; line-height: 20px; overflow: hidden; white-space: nowrap;
  letter-spacing: -.4px; color: #5f6368;
  -webkit-mask-image: linear-gradient(90deg, #000 50%, transparent); mask-image: linear-gradient(90deg, #000 50%, transparent);
}
.x { width: 12px; height: 12px; margin: 4px 0 0 9px; }
.newtab { width: 16px; height: 16px; margin: 7px 0 0 17px; }
.controls { display: flex; gap: 43px; margin: 5px 16px 0 auto; }
.controls svg { width: 14px; height: 14px; }
.controls path { fill: none; stroke: #8d9094; stroke-width: 1; }

.toolbar { height: 45px; flex: none; display: flex; align-items: center; padding-left: 13px; }
.nav { width: 17px; height: 17px; margin: 0 24px 0 0; }
.nav path { fill: none; stroke-width: 1.900; }
.nav:nth-child(3) { margin: 0 17px 0 -1px; }
.omnibox { width: 1570px; flex: none; height: 35px; border-radius: 18px; background: #f1f3f4; display: flex; align-items: center; padding-left: 18px; }
.lock { width: 11px; height: 14px; }
.url { margin-left: 14.500px; font-size: 17px; line-height: 30px; letter-spacing: -.13px; color: #5f6368; }
.url b { font-weight: 400; color: #202124; }
.share { width: 20px; height: 18px; margin-left: auto; }
.star { width: 23px; height: 23px; margin: 0 10px 0 19px; }
.tools { display: flex; align-items: center; margin-left: 19px; }
.tools svg { width: 19px; height: 19px; margin-right: 21px; fill: #5f6368; }
.me { width: 40px; height: 40px; border-radius: 50%; background: #f06c00; color: #fff; display: flex; align-items: center; justify-content: center; font: 500 20px/40px Roboto, sans-serif; }
.me.small { width: 28px; height: 28px; font-size: 15px; line-height: 28px; margin: 0 16px 0 -4px; }

.bookmarks { height: 41px; flex: none; display: flex; align-items: center; padding: 0 16px 5px 12px; border-bottom: 1px solid #dadce0; font-size: 15px; letter-spacing: -.36px; }
.bm { display: flex; align-items: center; gap: 10px; white-space: nowrap; width: 88px; flex: none; }
.bm > span:last-child { padding-bottom: 1px; }
.bm svg { width: 20px; height: 20px; }
.bm svg.g { width: 16px; height: 16px; margin: 0 2px; }
.bm:nth-child(2) { width: 108px; }
.bm:nth-child(3) { width: 186px; }
.bm:nth-child(4) { width: 169px; gap: 9px; }
.bm:nth-child(5) { width: 99px; }
.bm:nth-child(6) { width: 188px; gap: 9px; }
.bm:nth-child(7) { width: 191px; }
.bm:nth-child(8) { width: 191px; }
.bm:nth-child(9) { width: 40px; }
.bm:nth-child(10) { width: 192px; }
.bm:nth-child(11) { width: 89px; }
.bm:nth-child(12) { width: 180px; }
.ejs, .ts, .pirple { width: 20px; height: 20px; flex: none; text-align: center; }
.ejs { background: #ffd21e; color: #111; font: 700 12px/20px "Open Sans", sans-serif; letter-spacing: -1px; }
.ts { background: #3178c6; color: #fff; font: 700 12px/24px "Open Sans", sans-serif; padding-left: 3px; letter-spacing: -.5px; }
.pirple { border-radius: 50%; background: #8e5bd6; color: #fff; font: 700 4px/20px Roboto, sans-serif; letter-spacing: 0; }
.more { margin-left: auto; font-size: 18px; line-height: 20px; margin-right: 3px; padding-bottom: 4px; }

/* Application header */
.header { height: 81px; flex: none; border-bottom: 1px solid #dadce0; display: flex; align-items: center; font-family: Lato, Roboto, sans-serif; }
.header svg { fill: #5f6368; }
.menu { width: 24px; height: 24px; margin-left: 27px; }
.logo { width: 40px; height: 40px; margin-left: 28px; }
.brand { width: 178px; margin-left: 15px; padding-bottom: 2px; font-size: 27.500px; color: #5f6368; letter-spacing: .05px; }
.btn { height: 45px; border: 1px solid #dadce0; border-radius: 5px; display: flex; align-items: center; justify-content: center; font-size: 17.500px; -webkit-text-stroke: .3px; }
.btn span { padding-bottom: 2px; }
.today { width: 82px; letter-spacing: .5px; }
.chev { width: 25px; height: 25px; margin: 0 0 0 15px; }
.today + .chev { margin-left: 33px; }
h1 { font-size: 27.500px; font-weight: 400; margin: 0 0 0 32.500px; padding-bottom: 2px; width: 200px; white-space: nowrap; letter-spacing: -.1px; }
.actions { display: flex; gap: 27px; margin-left: auto; }
.actions svg { width: 30px; height: 30px; }
.actions svg:first-child { margin-right: -4px; }
.month { width: 107px; margin-left: 25px; gap: 15px; letter-spacing: .8px; }
.month svg { width: 10px; height: 5px; margin-right: -5px; }
.header .apps { width: 20px; height: 20px; margin: 0 30px 0 53px; }
.header .me { margin-right: 16px; }

/* Sidebar */
.main { height: 810px; flex: none; display: flex; }
.sidebar { width: 324px; flex: none; display: flex; flex-direction: column; font-size: 17.500px; }
.create { width: 185px; height: 60px; flex: none; margin: 19px 0 0 4px; border: 0; border-radius: 30px; display: flex; align-items: center; padding-left: 20px; box-shadow: 0 1px 2px rgba(60,64,67,.3), 0 1px 4px 1px rgba(60,64,67,.18); }
.cplus { width: 31px; height: 31px; }
.create span, .minihead span, .grouphead span { font: 400 18px Lato, Roboto, sans-serif; -webkit-text-stroke: .3px; padding-bottom: 2px; }
.create span { width: 58px; margin: 0 20px 0 24px; text-align: left; letter-spacing: .85px; }
.caret { width: 10px; height: 5px; }
.scroll { flex: 1; margin-top: 26px; display: flex; min-height: 0; }
.content { width: 279px; padding-left: 29px; overflow: hidden; flex: none; }
.minihead { height: 28px; display: flex; align-items: center; letter-spacing: .3px; }
.minihead span { flex: 1; }
.minihead svg { width: 24px; height: 24px; margin-right: 14px; fill: #5f6368; }
.minihead svg:last-child { margin-right: -1px; }
.mini { display: grid; grid-template-columns: repeat(7, 38.400px); grid-auto-rows: 35px; margin: 6px 0 0 -11px; font-size: 12.500px; font-weight: 500; letter-spacing: .4px; }
.mini span { display: flex; align-items: center; justify-content: center; }
.mini .dim { color: #70757a; }
.mini .sel i { width: 30px; height: 30px; border-radius: 50%; background: #d2e3fc; color: #1967d2; font-style: normal; display: flex; align-items: center; justify-content: center; }
.tz { height: 24px; margin-top: 31px; display: flex; align-items: center; }
.clock { margin-left: auto; }
.tz svg { width: 16px; height: 16px; margin: 0 4px 0 12px; }
.people { height: 45px; margin-top: 28px; background: #f1f3f4; border-radius: 5px; display: flex; align-items: center; padding-left: 16px; color: #5f6368; }
.people svg { width: 23px; height: 18px; margin: -6px 16px 0 0; }
.grouphead { height: 24px; margin-top: 37px; display: flex; align-items: center; letter-spacing: .55px; }
.grouphead svg { width: 24px; height: 24px; fill: #3c4043; margin-right: 1px; }
.grouphead span { margin-right: auto; }
.grouphead .add { width: 25px; height: 25px; fill: #5f6368; margin-right: 17px; }
.cals { margin-top: 13px; }
.cals li { height: 40px; display: flex; align-items: center; }
.box { width: 23px; height: 22px; border-radius: 3px; margin-right: 12px; display: flex; align-items: center; justify-content: center; }
.box::after { content: ""; width: 14px; height: 6px; border: solid #fff; border-width: 0 0 3px 3px; transform: translateY(-1px) rotate(-45deg); }
.lav { background: #7986cb; }
.yel { background: #e4c441; }
.ind { background: #3f51b5; }
.blu { background: #4285f4; }
.grn { background: #0b8043; }
.other { margin-top: 17px; letter-spacing: .75px; }
.last { margin-top: 22px; }
.last li { align-items: flex-start; }
.track { width: 10px; flex: none; margin-left: 25px; }
.thumb { width: 10px; height: 578px; border-radius: 5px; background: #bdc1c6; }

/* Month grid */
.grid { width: 1521px; flex: none; display: grid; grid-template-columns: repeat(7, 1fr); grid-template-rows: 182px 158px 157px 157px 156px; border-right: 1px solid #dadce0; font-size: 15px; }
.day { border-left: 1px solid #dadce0; border-bottom: 1px solid #dadce0; min-width: 0; overflow: hidden; padding: 8px 11.500px 0 11px; }
.day:nth-last-child(-n+7) { border-bottom: 0; }
.dow { display: block; text-align: center; font-size: 13.750px; font-weight: 500; line-height: 18px; color: #70757a; padding-top: 3px; height: 25px; }
.num { display: block; text-align: center; font-weight: 500; line-height: 25px; letter-spacing: .3px; }
.num.dim { color: #70757a; }
.ev { display: flex; align-items: center; height: 30px; white-space: nowrap; overflow: hidden; letter-spacing: .1px; }
.num + .ev { margin-top: 2px; }
.ev i { width: 10px; height: 10px; border-radius: 50%; background: #7986cb; margin: 2px 7px 0 0; flex: none; }
.ev i.red { background: #f4511e; }
.ev b { font-weight: 500; margin-left: 5.500px; letter-spacing: 0; }

/* Side panel */
.panel { flex: 1; display: flex; flex-direction: column; align-items: center; padding: 23px 0 0 7px; }
.panel svg { width: 24px; height: 24px; margin-bottom: 46px; }
hr { width: 25px; height: 1px; border: 0; background: #dadce0; margin: -3px 0 43px; flex: none; }
.panel .addon { width: 26px; height: 26px; fill: #000; }
.panel .collapse { width: 24px; height: 24px; margin: auto 0 21px; fill: #5f6368; }

/* Taskbar */
.taskbar { height: 53px; flex: none; display: flex; border-top: 1px solid #d6dc9a; background: linear-gradient(90deg, #e8ec92 0, #e3ee9a 105px, #dce5b4 135px, #e1e6b0 330px, #dde9ab 600px, #e5f096 900px, #e6f19b 1160px, #dfeda5 1400px, #dae4b8 1570px, #e0e9b4 1680px, #e4ee98 1790px, #e7e899 1908px); }
.widgets { width: 30px; height: 28px; margin: 15px 0 0 15px; }
.apps-row { display: flex; flex: none; margin-left: 612.500px; padding-top: 5px; gap: 12px; }
.app { width: 43.050px; flex: none; height: 47px; position: relative; display: flex; justify-content: center; padding-top: 9px; }
.app svg { width: 29px; height: 29px; }
.run::after, .current::after { content: ""; position: absolute; bottom: 0; left: 18px; width: 7px; height: 3px; border-radius: 2px 2px 0 0; background: #858b5c; }
.current { background: rgba(255,255,255,.55); border-radius: 5px; box-shadow: 5px 0 0 -1px rgba(255,255,255,.3); }
.current::after { left: 12px; width: 20px; background: #0078d4; }
.badge { position: absolute; left: 24px; top: 4px; width: 18px; height: 18px; border-radius: 50%; background: #ef5454; color: #fff; font-size: 13px; font-weight: 600; line-height: 18px; text-align: center; }
.tray { margin-left: auto; display: flex; align-items: center; color: #1b1b1b; height: 49px; margin-top: 4px; }
.tray svg { margin-bottom: 2px; }
.t1 { width: 16px; height: 10px; }
.t2 { width: 20px; height: 20px; margin-left: 12px; }
.t3 { width: 14px; height: 20px; margin-left: 18px; }
.lang { width: 20px; font-size: 15px; letter-spacing: -.2px; margin-left: 30px; white-space: nowrap; padding-top: 1px; }
.t4 { width: 20px; height: 15px; margin-left: 28px; }
.t5 { width: 20px; height: 17px; margin-left: 10px; }
.t6 { width: 20px; height: 16px; margin-left: 10px; }
.time { width: 82px; display: flex; flex-direction: column; text-align: right; font-size: 15px; line-height: 20px; letter-spacing: -.3px; margin-left: 6px; white-space: nowrap; padding-bottom: 2px; }
.t7 { width: 17px; height: 18px; margin: 0 20px 0 12px; }

/* Screen share overlay */
.sharebar { position: absolute; left: 670px; top: 0; width: 406px; height: 27px; display: flex; border-radius: 0 0 4px 4px; overflow: hidden; font-size: 15px; }
.sharing { width: 293px; background: #25d959; display: flex; align-items: center; justify-content: space-between; padding: 0 13px 0 8px; font-weight: 700; color: #17232b; letter-spacing: -.55px; }
.sharing span { margin-left: -4px; }
.sharing svg { width: 13px; height: 14px; margin-top: 2px; }
.stop { flex: 1; background: #e02828; color: #fff; display: flex; align-items: center; padding: 0 0 2px 8px; gap: 8px; letter-spacing: -.25px; }
.stop i { width: 11px; height: 11px; border-radius: 1px; background: #fff; }
.topshade { position: absolute; left: 259px; top: 0; width: 1228px; height: 1px; background: linear-gradient(90deg, rgba(60,90,10,.35) 411px, transparent 411px, transparent 817px, rgba(60,90,10,.35) 817px); }
.drawer { position: absolute; left: 0; top: 480px; width: 8px; height: 327px; background: #202020; box-shadow: 2px 2px 8px rgba(0,0,0,.35); }
```
FILE: app.js
```js
// Mini calendar
const mini = document.getElementById('mini');
'SMTWTFS'.split('').forEach(d => { mini.innerHTML += `<span class="dim">${d}</span>`; });
for (let i = 0; i < 42; i++) {
  const n = i === 0 ? 31 : i <= 31 ? i : i - 31;
  const cls = i === 0 || i > 31 ? 'dim' : i === 1 ? 'sel' : '';
  mini.innerHTML += `<span class="${cls}">${i === 1 ? '<i>1</i>' : n}</span>`;
}

// Month view
const days = ['SUN', 'MON', 'TUE', 'WED', 'THU', 'FRI', 'SAT'];
const capstone = ['9am', 'Capstone project week'];
const rest = ['1pm', 'break time'];
const practice = ['10am', 'ambrose Isigba practice'];
const saturday = ['9am', 'isigba ambrose Pract'];
const special = {
  1: [capstone, ['10am', 'Isigba Ambrose'], [...rest, 'red']],
  5: [capstone, practice, rest],
  6: [saturday],
  33: [capstone, practice, rest],
  34: [saturday]
};
let html = '';
for (let i = 0; i < 35; i++) {
  const col = i % 7;
  const events = special[i] || (col > 0 && col < 6 ? [capstone, rest] : []);
  const label = i === 0 ? '31' : i === 1 ? 'Aug 1' : i === 32 ? 'Sep 1' : i > 32 ? i - 31 : i;
  html += '<div class="day">' + (i < 7 ? `<span class="dow">${days[col]}</span>` : '') +
    `<span class="num${i === 0 || i > 31 ? ' dim' : ''}">${label}</span>` +
    events.map(e => `<div class="ev"><i class="${e[2] || ''}"></i>${e[0]}<b>${e[1]}</b></div>`).join('') + '</div>';
}
document.getElementById('grid').innerHTML = html;
```
